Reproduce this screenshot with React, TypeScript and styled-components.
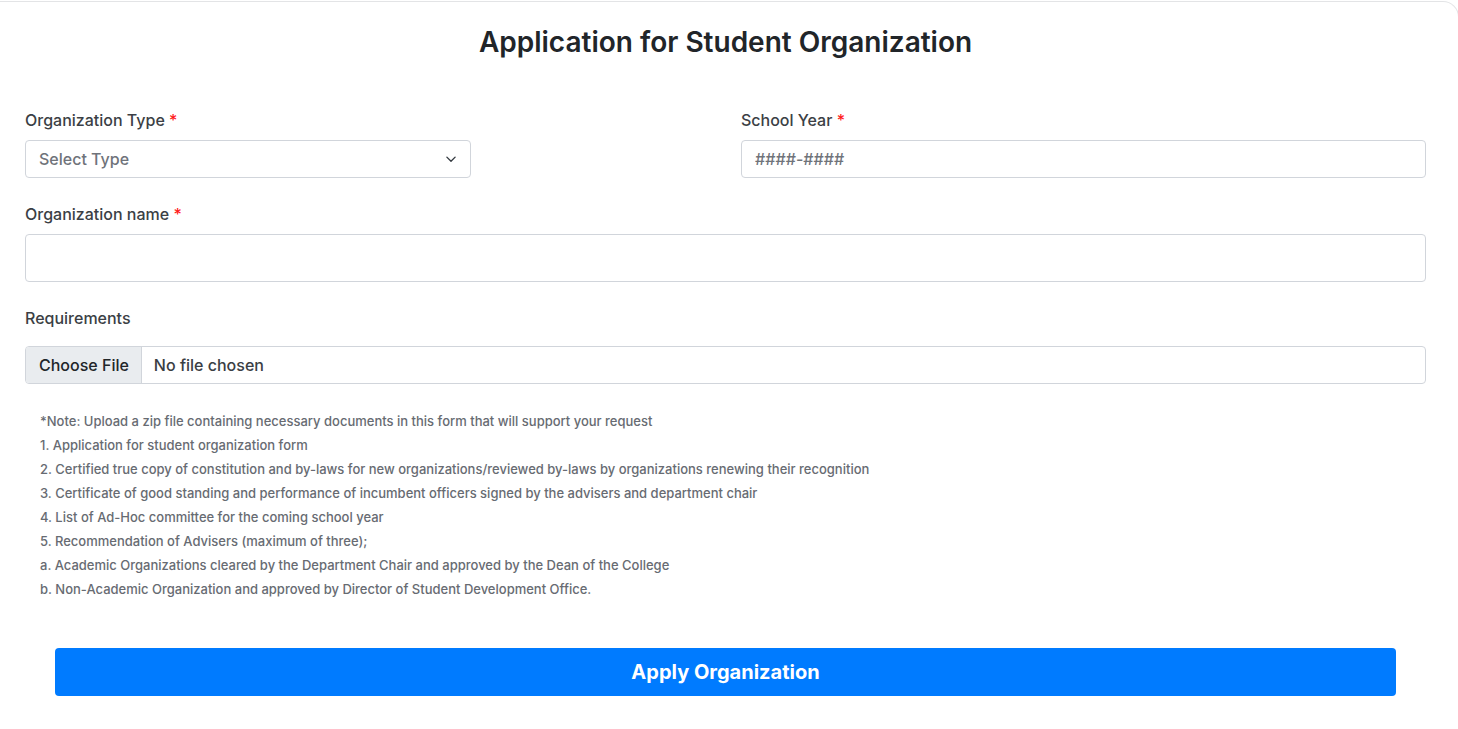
import React from "react";
import styled, { createGlobalStyle } from "styled-components";

const Global = createGlobalStyle`
  html, body { margin: 0; padding: 0; background: #ffffff; }
  body { font-family: Inter, "Noto Sans", Arial, sans-serif; overflow: hidden; }
  * { box-sizing: border-box; }
`;

const Page = styled.div`
  padding-top: 1px;
  width: 1458px;
  overflow: hidden;
`;

const Card = styled.form`
  width: 1459px;
  border: 1px solid #e3e4e6;
  border-left: none;
  border-top-right-radius: 16px;
  padding: 23px 32px 33px 25px;
  background: #fff;
`;

const Title = styled.h1`
  margin: 0;
  text-align: center;
  font-size: 28px;
  line-height: 34px;
  font-weight: 600;
  color: #212529;
`;

const TopGrid = styled.div`
  margin-top: 49px;
  display: grid;
  grid-template-columns: 716px 1fr;
`;

const Field = styled.div<{ $width?: string; $gap?: string; $top?: string }>`
  display: flex;
  flex-direction: column;
  gap: ${(p) => p.$gap || "8px"};
  width: ${(p) => p.$width || "auto"};
  margin-top: ${(p) => p.$top || "0"};
`;

const Label = styled.label`
  font-size: 16px;
  line-height: 24px;
  font-weight: 500;
  color: #3b3f45;
`;

const Req = styled.span`
  color: #ff1a1a;
`;

const SelectBox = styled.div`
  height: 38px;
  border: 1px solid #d1d5db;
  border-radius: 4px;
  display: flex;
  align-items: center;
  justify-content: space-between;
  padding: 0 13px 0 13px;
  font-size: 16px;
  font-weight: 500;
  color: #6f737a;
`;

const TextInput = styled.input<{ $h: number }>`
  height: ${(p) => p.$h}px;
  width: 100%;
  border: 1px solid #d1d5db;
  border-radius: 4px;
  padding: 0 13px;
  font-family: inherit;
  font-size: 16px;
  font-weight: 500;
  color: #212529;
  outline: none;
  &::placeholder { color: #6f737a; }
`;

const FileBox = styled.div`
  height: 38px;
  border: 1px solid #d1d5db;
  border-radius: 4px;
  display: flex;
  align-items: stretch;
  overflow: hidden;
  font-size: 16px;
  font-weight: 500;
`;

const FileButton = styled.span`
  background: #e9ecef;
  border-right: 1px solid #d1d5db;
  display: flex;
  align-items: center;
  padding: 0 12px 0 13px;
  color: #212529;
`;

const FileName = styled.span`
  display: flex;
  align-items: center;
  padding-left: 12px;
  color: #3a3e44;
`;

const Notes = styled.div`
  margin-top: 25px;
  padding-left: 15px;
  font-size: 13px;
  line-height: 24px;
  font-weight: 500;
  color: #676b72;
`;

const SubmitRow = styled.div`
  margin-top: 47px;
  padding: 0 30px;
`;

const Submit = styled.button`
  width: 100%;
  height: 48px;
  border: none;
  border-radius: 4px;
  background: #007bff;
  color: #fff;
  font-family: inherit;
  font-size: 20px;
  font-weight: 650;
  cursor: pointer;
`;

const notes = [
  "*Note: Upload a zip file containing necessary documents in this form that will support your request",
  "1. Application for student organization form",
  "2. Certified true copy of constitution and by-laws for new organizations/reviewed by-laws by organizations renewing their recognition",
  "3. Certificate of good standing and performance of incumbent officers signed by the advisers and department chair",
  "4. List of Ad-Hoc committee for the coming school year",
  "5. Recommendation of Advisers (maximum of three);",
  "a. Academic Organizations cleared by the Department Chair and approved by the Dean of the College",
  "b. Non-Academic Organization and approved by Director of Student Development Office.",
];

export default function App() {
  return (
    <Page>
      <Global />
      <Card onSubmit={(e) => e.preventDefault()}>
        <Title>Application for Student Organization</Title>
        <TopGrid>
          <Field $width="446px">
            <Label>
              Organization Type <Req>*</Req>
            </Label>
            <SelectBox>
              <span>Select Type</span>
              <svg width="12" height="12" viewBox="0 0 16 16" fill="none">
                <path d="M2.5 5.5L8 11L13.5 5.5" stroke="#343a40" strokeWidth="1.8" strokeLinecap="round" strokeLinejoin="round" />
              </svg>
            </SelectBox>
          </Field>
          <Field>
            <Label>
              School Year <Req>*</Req>
            </Label>
            <TextInput $h={38} placeholder="####-####" />
          </Field>
        </TopGrid>
        <Field $top="24px">
          <Label>
            Organization name <Req>*</Req>
          </Label>
          <TextInput $h={48} />
        </Field>
        <Field $top="24px" $gap="16px">
          <Label>Requirements</Label>
          <FileBox>
            <FileButton>Choose File</FileButton>
            <FileName>No file chosen</FileName>
          </FileBox>
        </Field>
        <Notes>
          {notes.map((n) => (
            <div key={n}>{n}</div>
          ))}
        </Notes>
        <SubmitRow>
          <Submit type="submit">Apply Organization</Submit>
        </SubmitRow>
      </Card>
    </Page>
  );
}
